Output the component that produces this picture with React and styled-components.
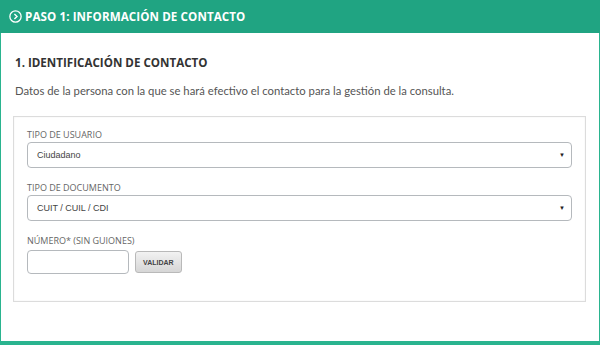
import styled, { createGlobalStyle } from 'styled-components';

const Global = createGlobalStyle`
  html, body {
    margin: 0;
    padding: 0;
    background: #ffffff;
  }
`;

function CircleArrow() {
  return (
    <svg width="13" height="13" viewBox="0 0 12 12">
      <circle cx="6" cy="6" r="5.2" fill="none" stroke="#fff" strokeWidth="1.2" />
      <path d="M5 3.6 L7.4 6 L5 8.4" fill="none" stroke="#fff" strokeWidth="1.3" />
    </svg>
  );
}

function App() {
  return (
    <Page>
      <Global />
      <Header>
        <CircleArrow />
        <HeaderTitle>Paso 1: Información de contacto</HeaderTitle>
      </Header>
      <Body>
        <Heading>1. Identificación de contacto</Heading>
        <Description>
          Datos de la persona con la que se hará efectivo el contacto para la gestión de la consulta.
        </Description>
        <Fieldset>
          <Field>
            <Label>Tipo de usuario</Label>
            <Select>
              <span>Ciudadano</span>
              <Arrow>▼</Arrow>
            </Select>
          </Field>
          <Field>
            <Label>Tipo de documento</Label>
            <Select>
              <span>CUIT / CUIL / CDI</span>
              <Arrow>▼</Arrow>
            </Select>
          </Field>
          <Field>
            <Label>Número* (sin guiones)</Label>
            <Row>
              <TextInput />
              <Button>Validar</Button>
            </Row>
          </Field>
        </Fieldset>
      </Body>
    </Page>
  );
}

export default App;

const Page = styled.div`
  width: 600px;
  height: 345px;
  box-sizing: border-box;
  border-left: 1px solid #2ab48f;
  border-right: 1px solid #2ab48f;
  border-bottom: 4px solid #2ab48f;
  display: flex;
  flex-direction: column;
`;

const Header = styled.div`
  height: 33px;
  background: #20a482;
  margin: 0 -1px;
  padding-left: 9px;
  display: flex;
  align-items: center;
  gap: 3px;
`;

const HeaderTitle = styled.div`
  font-family: 'Open Sans', sans-serif;
  font-weight: 700;
  font-size: 11.6px;
  letter-spacing: 0.1px;
  color: #ffffff;
  text-transform: uppercase;
`;

const Body = styled.div`
  padding: 21px 13px 0 12px;
  display: flex;
  flex-direction: column;
`;

const Heading = styled.div`
  font-family: 'Open Sans', sans-serif;
  font-weight: 700;
  font-size: 11.6px;
  color: #333;
  text-transform: uppercase;
  padding-left: 2px;
  line-height: 18px;
`;

const Description = styled.div`
  font-family: 'Lato', sans-serif;
  font-size: 11.3px;
  color: #555;
  margin-top: 11px;
  padding-left: 2px;
  line-height: 16px;
`;

const Fieldset = styled.div`
  margin-top: 17px;
  border: 1px solid #dcdcdc;
  box-shadow: inset 0 0 2px #eee;
  padding: 13px 13px 27px 13px;
  display: flex;
  flex-direction: column;
  gap: 15px;
`;

const Field = styled.div`
  display: flex;
  flex-direction: column;
`;

const Label = styled.div`
  font-family: 'Open Sans', sans-serif;
  font-size: 9px;
  color: #666;
  text-transform: uppercase;
  line-height: 10px;
  margin-bottom: 2px;
`;

const Select = styled.div`
  height: 26px;
  box-sizing: border-box;
  border: 1px solid #b5b9bd;
  border-radius: 4px;
  padding: 0 6px 0 9px;
  display: flex;
  align-items: center;
  justify-content: space-between;
  font-family: 'Liberation Sans', sans-serif;
  font-size: 9px;
  color: #444;
`;

const Arrow = styled.span`
  font-size: 6px;
  color: #222;
`;

const Row = styled.div`
  margin-top: 2px;
  display: flex;
  align-items: center;
  gap: 6px;
`;

const TextInput = styled.div`
  width: 102px;
  height: 24px;
  box-sizing: border-box;
  border: 1px solid #b5b9bd;
  border-radius: 4px;
`;

const Button = styled.div`
  height: 20px;
  padding: 0 7px;
  display: flex;
  align-items: center;
  border: 1px solid #b9b9b9;
  border-radius: 3px;
  background: linear-gradient(#f2f2f2, #d6d6d6);
  font-family: 'Liberation Sans', sans-serif;
  font-weight: 700;
  font-size: 7px;
  color: #444;
  text-transform: uppercase;
`;
